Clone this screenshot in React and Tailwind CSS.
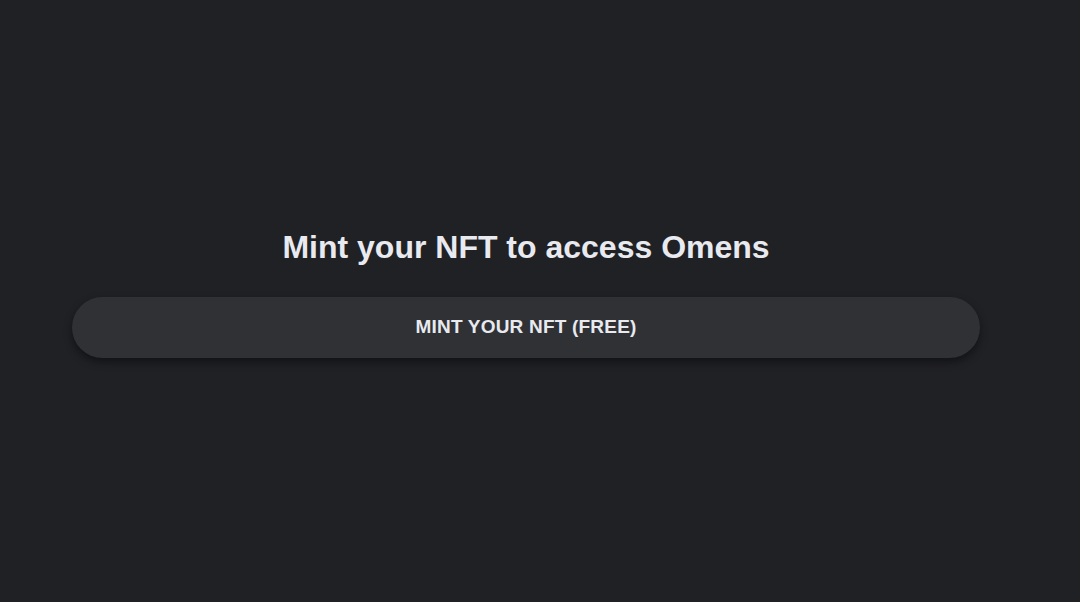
export default function App() {
    return (
        <main className="min-h-screen w-full bg-[#202125] font-['Liberation_Sans',Arial,sans-serif] text-[#e8eaf0]">
            <div className="flex flex-col items-center pt-[229px] pl-[72px] pr-[100px]">
                <h1 className="text-[32px] leading-[37px] font-bold">Mint your NFT to access Omens</h1>
                <button className="mt-[31px] w-full h-[61px] rounded-full bg-[#303135] shadow-[0_4px_8px_rgba(0,0,0,0.45)] flex items-center justify-center">
                    <span className="text-[19px] font-bold uppercase tracking-[0.2px]">Mint your NFT (Free)</span>
                </button>
            </div>
        </main>
    );
}
